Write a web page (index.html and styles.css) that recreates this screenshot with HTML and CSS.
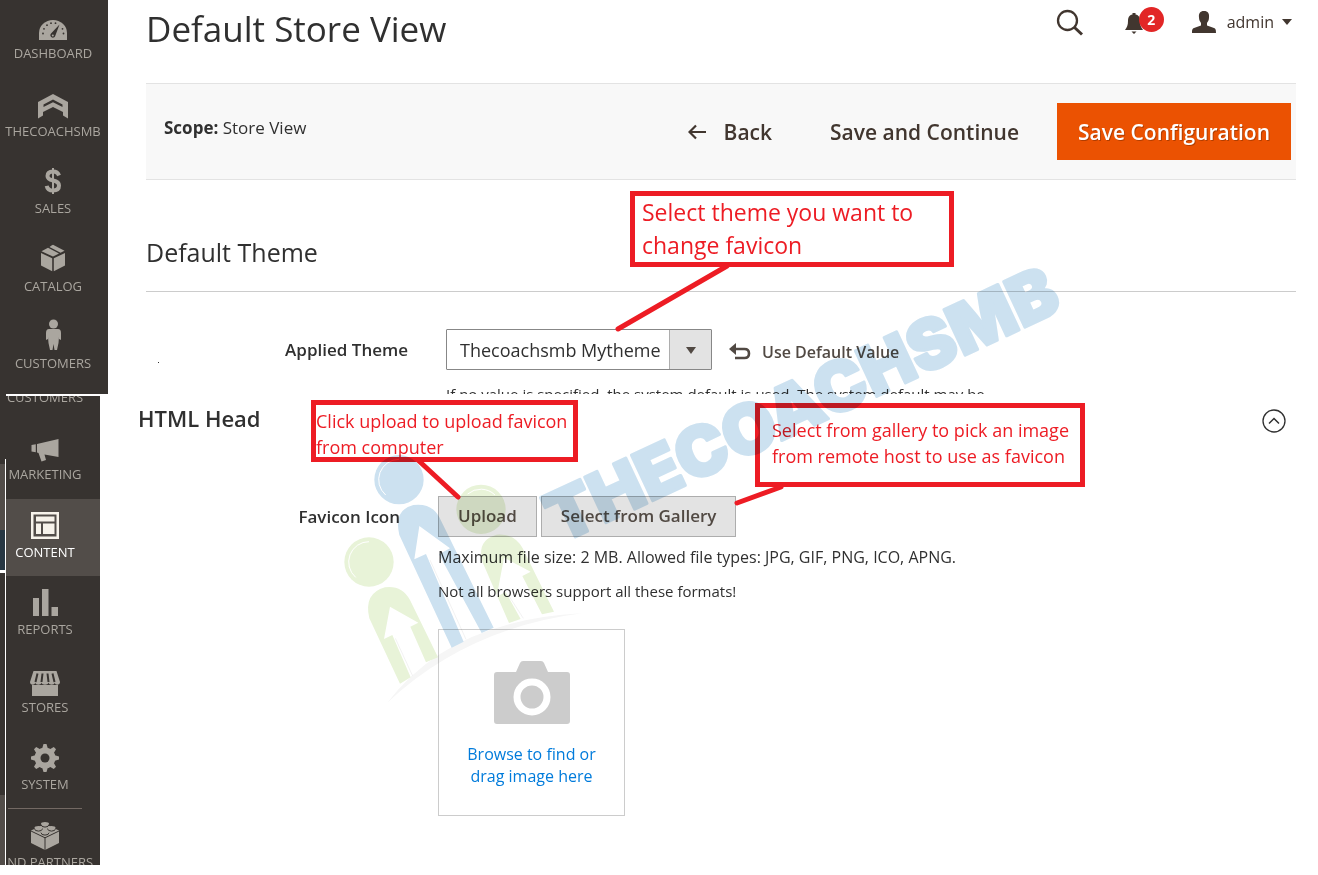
FILE: index.html
```html
<!DOCTYPE html>
<html lang="en">
<head>
  <meta charset="UTF-8">
  <title>Default Store View</title>
  <meta name="viewport" content="width=device-width, initial-scale=1.0">
  <link rel="stylesheet" href="styles.css">
</head>
<body>
  <section class="panel panel-top">
    <nav class="sidebar">
      <ul class="menu">
        <li><a href="#">
          <svg viewBox="0 0 32 32"><path d="M2 30V23A14 13 0 0 1 30 23V30Z"/><g class="cut"><path d="M22.500 14.500L18.200 26A2.500 2.500 0 1 1 14 23.500Z"/><circle cx="6" cy="23.500" r=".9"/><circle cx="7" cy="18.800" r=".9"/><circle cx="10" cy="15.200" r=".9"/><circle cx="14" cy="13.200" r=".9"/><circle cx="18.500" cy="13.200" r=".9"/><circle cx="25.500" cy="18.800" r=".9"/><circle cx="26.500" cy="23.500" r=".9"/></g><circle cx="15.800" cy="25.500" r="1"/></svg>
          <span>DASHBOARD</span></a></li>
        <li><a href="#">
          <svg viewBox="0 0 32 32"><path d="M16 6L31 14V30.500L26 27.500V24L16 19L6 24V27.500L1 30.500V14Z"/><path class="cut" d="M6.500 16.500L16 11.600L25.500 16.500V19L16 14.200L6.500 19Z"/></svg>
          <span>THECOACHSMB</span></a></li>
        <li><a href="#">
          <svg viewBox="0 0 32 32"><path class="stroke" d="M22 10.500C21 7.500 19 6.500 16 6.500C12 6.500 10.500 8.500 10.500 11C10.500 17.500 22 13.500 22 20.500C22 23.500 20 25.500 16 25.500C12.500 25.500 10.300 24 9.700 20.800" stroke-width="4"/><path class="stroke" d="M16 3V29" stroke-width="2"/></svg>
          <span>SALES</span></a></li>
        <li><a href="#">
          <svg viewBox="0 0 32 32"><path d="M14.500 2.500L16 1.800L27.500 7.800L23.500 9.800L12.500 4ZM11 4.800L22 10.600L16 13.600L4.500 8.200ZM4 10L15.200 15.300V28.300L4 22.500ZM28 10L16.800 15.300V28.300L28 22.500Z"/></svg>
          <span>CATALOG</span></a></li>
        <li><a href="#">
          <svg viewBox="0 0 32 32"><circle cx="16.500" cy="4" r="4.500"/><path d="M12 9H21C23 9 24 10.500 24 13V20L22 19V17L21.500 23L20 30H17.500L16.500 24L15.500 30H13L11.500 23L11 17V19L9 20V13C9 10.500 10 9 12 9Z"/></svg>
          <span>CUSTOMERS</span></a></li>
      </ul>
    </nav>

    <main class="content">
      <header class="page-header">
        <h1>Default Store View</h1>
        <div class="tools">
          <button class="tool" aria-label="Search"><svg class="i-search" viewBox="0 0 28 28"><circle cx="11.500" cy="11.500" r="9.500" fill="none" stroke="#41362f" stroke-width="2.300"/><path d="M18 18L26 25.500" stroke="#41362f" stroke-width="3"/></svg></button>
          <button class="tool bell" aria-label="Notifications"><svg class="i-bell" viewBox="0 0 20 22"><path fill="#41362f" d="M8.500 1H11.500V2.500C15 3 16 6 16 9C16 13 17 15 19 18H1C3 15 4 13 4 9C4 6 5 3 8.500 2.500ZM7.500 19.500H12.500L10 22Z"/></svg><span class="count">2</span></button>
          <button class="tool user"><svg class="i-user" viewBox="0 0 24 22"><path fill="#41362f" d="M12 0C16 0 17.500 2.500 17 6.500C17 9 16 10.500 15 12V14.500L22 17C23.500 17.600 24 18.500 24 22H0C0 18.500 .5 17.600 2 17L9 14.500V12C8 10.500 7 9 7 6.500C6.500 2.500 8 0 12 0Z"/></svg><span>admin</span><i class="caret"></i></button>
        </div>
      </header>

      <div class="actions">
        <div class="scope"><b>Scope:</b> Store View</div>
        <div class="action-buttons">
          <button class="btn-plain btn-back"><svg class="i-back" viewBox="0 0 18 16"><path d="M18 8H2M8 1.500L1.500 8L8 14.500" fill="none" stroke="#41362f" stroke-width="2.200"/></svg>Back</button>
          <button class="btn-plain">Save and Continue</button>
          <button class="btn-primary">Save Configuration</button>
        </div>
      </div>

      <h2 class="section-title">Default Theme</h2>
      <div class="field">
        <span class="dot"></span>
        <label for="theme">Applied Theme</label>
        <div class="select-wrap">
          <select id="theme"><option>Thecoachsmb Mytheme</option></select>
        </div>
        <button class="use-default"><svg class="i-undo" viewBox="0 0 22 17"><path fill="#514943" d="M0 6L7 0V12Z"/><path d="M5 6H15.500C18.500 6 20 8 20 10.500S18.500 15 15.500 15H6" fill="none" stroke="#514943" stroke-width="2.600"/></svg>Use Default Value</button>
      </div>
      <p class="field-note">If no value is specified, the system default is used. The system default may be</p>
    </main>
  </section>

  <section class="panel panel-bottom">
    <div class="strip"><i class="strip-active"></i><i class="strip-blue"></i><i class="strip-dark"></i><i class="strip-end"></i></div>
    <nav class="sidebar">
      <div class="cropped">CUSTOMERS</div>
      <ul class="menu">
        <li><a href="#">
          <svg viewBox="0 0 32 32"><path d="M8 13L29.500 8V26L15.500 23.500L17 29L12.500 30.500L9.500 22L8 21.500ZM2.500 14L6.800 13.200V21.300L2.500 20.500Z"/></svg>
          <span>MARKETING</span></a></li>
        <li class="active"><a href="#">
          <svg viewBox="0 0 32 32"><path fill-rule="evenodd" d="M2 3H30V30H2ZM4.500 5.500V27.500H27.500V5.500Z"/><path d="M7 7.500H25.500V12.500H7ZM7 14.500H12V25H7ZM14 14.500H25.500V25H14Z"/></svg>
          <span>CONTENT</span></a></li>
        <li><a href="#">
          <svg viewBox="0 0 32 32"><path d="M4 12H10V30H4ZM13 3H19.500V30H13ZM22.500 21H29V30H22.500Z"/></svg>
          <span>REPORTS</span></a></li>
        <li><a href="#">
          <svg viewBox="0 0 32 32"><path d="M4.500 7H27.500L31 18C31 21.500 26 21.500 25.800 18.500C25.500 21.500 20 21.500 19.500 18.500C19 21.500 13 21.500 12.500 18.500C12 21.500 6.500 21.500 6.200 18.500C6 21.500 1 21.500 1 18ZM3 21H29V32H3Z"/><path class="cut-line" d="M8.500 9.500L6.500 18M13.500 9.500L12.500 18M18.500 9.500L19.500 18M23.500 9.500L25.500 18" stroke-width="2"/></svg>
          <span>STORES</span></a></li>
        <li><a href="#">
          <svg viewBox="0 0 32 32"><circle cx="16" cy="17" r="10.500"/><path d="M13 8L14.500 3H17.500L19 8ZM13 26L14.500 31H17.500L19 26ZM7 14L2 15.500V18.500L7 20ZM25 14L30 15.500V18.500L25 20ZM8 13.500L5 8.200L7.200 6L12.500 9ZM19.500 9L24.800 6L27 8.200L24 13.500ZM8 20.500L5 25.800L7.200 28L12.500 25ZM19.500 25L24.800 28L27 25.800L24 20.500Z"/><circle class="cut" cx="16" cy="17" r="4.500"/></svg>
          <span>SYSTEM</span></a></li>
      </ul>
      <a class="partners" href="#">
        <svg viewBox="0 0 32 32"><path d="M2 11.500L16 5L30 11.500V24L16 31L2 24Z"/><path class="thin" d="M2 12L16 18.800L30 12M16 18.800V31"/><g class="thin"><path d="M12 5.500A4 2.600 0 0 0 20 5.500M5.500 9.500A4 2.600 0 0 0 13.500 9.500M18.500 9.500A4 2.600 0 0 0 26.500 9.500M12 13.500A4 2.600 0 0 0 20 13.500"/></g><ellipse cx="16" cy="4.800" rx="4" ry="1.900"/><ellipse cx="9.500" cy="8.800" rx="4" ry="1.900"/><ellipse cx="22.500" cy="8.800" rx="4" ry="1.900"/><ellipse cx="16" cy="12.800" rx="4" ry="1.900"/></svg>
        <span>FIND PARTNERS</span></a>
    </nav>

    <div class="content content-head">
      <div class="head-row">
        <h2>HTML Head</h2>
        <button class="collapse" aria-label="Collapse"><svg class="i-collapse" viewBox="0 0 24 24"><circle cx="12" cy="12" r="11" fill="none" stroke="#303030" stroke-width="1.300"/><path d="M7 14.500L12 9.500L17 14.500" fill="none" stroke="#303030" stroke-width="1.500"/></svg></button>
      </div>
      <div class="upload-row">
        <span class="upload-label">Favicon Icon</span>
        <div class="upload">
          <div class="upload-buttons">
            <button class="btn-grey">Upload</button>
            <button class="btn-grey">Select from Gallery</button>
          </div>
          <p class="hint">Maximum file size: 2 MB. Allowed file types: JPG, GIF, PNG, ICO, APNG.</p>
          <p class="hint hint-small">Not all browsers support all these formats!</p>
          <button class="dropzone">
            <svg class="i-camera" viewBox="0 0 76 64"><path fill="#ccc" d="M3 11H22L26 2Q27 0 29 0H47Q49 0 50 2L54 11H73Q76 11 76 14V60Q76 63 73 63H3Q0 63 0 60V14Q0 11 3 11Z"/><circle cx="38" cy="36" r="15" fill="#ccc" stroke="#fff" stroke-width="7"/></svg>
            <span>Browse to find or<br>drag image here</span>
          </button>
        </div>
      </div>
    </div>
  </section>

  <div class="note note-theme">Select theme you want to<br>change favicon</div>
  <div class="note note-upload">Click upload to upload favicon<br>from computer</div>
  <div class="note note-gallery">Select from gallery to pick an image<br>from remote host to use as favicon</div>
  <svg class="overlay arrows" viewBox="0 0 1318 875">
    <path d="M727 266L618 329M419 461L458 497M781 487L737 503"/>
  </svg>

  <svg class="overlay watermark" viewBox="0 0 1318 875">
    <g transform="translate(330 440) scale(.33333)">
      <path fill="#f6f6f6" d="M172 788Q360 540 755 520Q410 565 172 788Z"/>
      <g fill="#cce1f0">
        <circle cx="207" cy="119" r="74"/>
        <path d="M365 623L208 285Q190 210 250 195Q305 188 328 232L491 563L455 579L327 343L360 325L268 258L253 358L288 342L401 605Z"/>
      </g>
      <g fill="#e8f3d8">
        <circle cx="117" cy="366" r="74"/>
        <circle cx="453" cy="208" r="74"/>
        <path d="M210 731L118 535Q100 460 165 442Q215 435 240 480L324 652L288 667L241 560L265 548L180 500L162 597L187 585L242 712Z"/>
        <path d="M537 549L457 365Q440 300 500 284Q555 280 578 325L672 515L636 523L577 408L602 395L522 353L500 470L527 456L572 537Z"/>
      </g>
      <g fill="none" stroke="#fff" stroke-width="3">
        <path d="M207 58A61 61 0 0 0 167 165M117 305A61 61 0 0 0 77 412M495 165A61 61 0 0 0 413 162"/>
        <path d="M300 360L408 598M196 595L248 708M535 465L580 535" stroke="#f2f2f2"/>
      </g>
    </g>
    <text class="watermark-text" transform="translate(560 544) rotate(-25)">THECOACHSMB</text>
  </svg>
</body>
</html>
```

FILE: styles.css
```css
* {
  box-sizing: border-box;
}
body {
  margin: 0;
  position: relative;
  background: #fff;
  color: #303030;
  font-family: "Open Sans", sans-serif;
  font-size: 16px;
}
h1, h2, p, ul {
  margin: 0;
  padding: 0;
  font-weight: 400;
}
button {
  border: 0;
  padding: 0;
  background: none;
  color: inherit;
  font-family: inherit;
  cursor: pointer;
}
.panel {
  display: flex;
  overflow: hidden;
}
.panel-top {
  height: 394px;
}
.panel-bottom {
  height: 471px;
}

/* sidebar */
.sidebar {
  flex: none;
  background: #373330;
  color: #aaa69f;
  overflow: hidden;
}
.panel-top .sidebar {
  width: 108px;
  padding-right: 2px;
}
.panel-bottom .sidebar {
  width: 94px;
  border-top: 2px solid #fff;
}
.menu {
  display: flex;
  flex-direction: column;
  height: 388px;
  list-style: none;
}
.menu li {
  flex: 1;
}
.sidebar a {
  display: flex;
  flex-direction: column;
  align-items: center;
  padding-top: 10px;
  color: inherit;
  text-decoration: none;
  font-size: 13px;
  line-height: 20px;
  white-space: nowrap;
}
.panel-bottom .menu a,
.partners,
.cropped {
  padding-right: 16px;
}
.sidebar svg {
  width: 32px;
  height: 32px;
  margin-bottom: 1px;
  fill: #aaa69f;
  overflow: visible;
}
.sidebar .active {
  background: #524d49;
  color: #fff;
}
.sidebar .active svg {
  fill: #f7f3eb;
}
.sidebar .cut {
  fill: #373330;
}
.sidebar .cut-line {
  fill: none;
  stroke: #373330;
  stroke-width: 2;
}
.sidebar .stroke {
  fill: none;
  stroke: #aaa69f;
}
.sidebar .thin {
  fill: none;
  stroke: #373330;
  stroke-width: 1;
}
.cropped {
  display: flex;
  align-items: flex-start;
  justify-content: center;
  height: 25px;
  font-size: 13px;
  line-height: 2px;
}
.sidebar .partners {
  position: relative;
}
.partners::before {
  content: "";
  position: absolute;
  top: -1px;
  left: 2px;
  width: 74px;
  height: 1px;
  background: #736963;
}
.strip {
  flex: none;
  display: flex;
  flex-direction: column;
  width: 6px;
  padding-top: 65px;
  background: linear-gradient(#373330 65px, #fff 65px);
}
.strip i {
  width: 5px;
}
.strip-active {
  height: 71px;
  border-top: 5px solid #373330;
  background: #524d49;
}
.strip-blue {
  height: 40px;
  background: #273743;
}
.strip-dark {
  height: 225px;
  border-top: 3px solid #fff;
  background: #373330;
}
.strip-end {
  flex: 1;
  background: #524d49;
}

/* main area */
.content {
  flex: 1;
  min-width: 0;
  padding: 0 22px 0 38px;
}
.page-header {
  display: flex;
  justify-content: space-between;
  height: 83px;
}
h1 {
  font-size: 35px;
  line-height: 58px;
}
.tools {
  display: flex;
  align-items: flex-start;
  padding: 8px 4px 0 0;
}
.tool {
  display: flex;
  align-items: center;
  height: 28px;
}
.i-search {
  width: 28px;
  height: 28px;
  margin-top: 2px;
}
.bell {
  position: relative;
  margin: 0 28px 0 40px;
  width: 40px;
}
.i-bell {
  width: 20px;
  height: 22px;
  margin-top: 2px;
}
.count {
  position: absolute;
  top: -1px;
  right: 0;
  width: 25px;
  height: 25px;
  border-radius: 50%;
  background: #e22626;
  color: #fff;
  font-size: 14px;
  font-weight: 700;
  line-height: 25px;
}
.user {
  font-size: 16px;
  color: #41362f;
}
.i-user {
  width: 24px;
  height: 22px;
  margin-right: 11px;
}
.caret {
  margin-left: 8px;
  border: 5px solid transparent;
  border-top: 6px solid #41362f;
  border-bottom: 0;
}
.actions {
  display: flex;
  justify-content: space-between;
  height: 97px;
  padding: 19px 5px 0 18px;
  border-top: 1px solid #e3e3e3;
  border-bottom: 1px solid #e3e3e3;
  background: #f8f8f8;
}
.scope {
  font-size: 17px;
  line-height: 50px;
}
.scope b {
  font-weight: 700;
}
.action-buttons {
  display: flex;
  align-items: flex-start;
}
.action-buttons button {
  height: 57px;
  font-size: 21px;
  font-weight: 600;
}
.action-buttons .btn-plain {
  margin-right: 38px;
  color: #41362f;
}
.action-buttons .btn-back {
  display: flex;
  align-items: center;
  margin-right: 58px;
}
.i-back {
  width: 18px;
  height: 16px;
  margin-right: 18px;
}
.btn-primary {
  padding: 0 21px;
  background: #eb5202;
  color: #fff;
  text-shadow: 1px 1px 0 #00000040;
}
.section-title {
  height: 112px;
  padding-top: 54px;
  border-bottom: 1px solid #ccc;
  font-size: 25px;
  line-height: 36px;
}
.field {
  display: flex;
  align-items: center;
  padding-top: 37px;
}
.dot {
  align-self: flex-end;
  width: 1px;
  height: 1px;
  margin: 0 0 7px 12px;
  background: #303030;
}
.field label {
  width: 249px;
  text-align: right;
  font-size: 17px;
  font-weight: 600;
}
.select-wrap {
  position: relative;
  width: 266px;
  margin-left: 38px;
}
.select-wrap::before {
  content: "";
  position: absolute;
  top: 1px;
  right: 1px;
  width: 41px;
  height: 39px;
  border-left: 1px solid #adadad;
  background: #e3e3e3;
  pointer-events: none;
}
.select-wrap::after {
  content: "";
  position: absolute;
  top: 18px;
  right: 16px;
  border: 5px solid transparent;
  border-top: 7px solid #514943;
  border-bottom: 0;
  pointer-events: none;
}
.select-wrap select {
  display: block;
  width: 100%;
  height: 41px;
  padding: 0 44px 0 13px;
  border: 1px solid #878787;
  border-radius: 1px;
  background: #fff;
  color: #303030;
  font-family: inherit;
  font-size: 18px;
  appearance: none;
}
.use-default {
  display: flex;
  align-items: center;
  margin-left: 17px;
  padding-top: 4px;
  color: #514943;
  font-size: 16px;
  font-weight: 600;
}
.i-undo {
  width: 22px;
  height: 17px;
  margin-right: 11px;
}
.field-note {
  padding: 13px 0 0 300px;
  font-size: 15px;
  line-height: 22px;
  white-space: nowrap;
}

/* html head */
.head-row {
  display: flex;
  justify-content: space-between;
  padding: 7px 10px 0 0;
}
.head-row h2 {
  font-size: 22px;
  font-weight: 600;
  line-height: 34px;
}
.i-collapse {
  display: block;
  width: 24px;
  height: 24px;
  margin-top: 5px;
}
.upload-row {
  display: flex;
  padding-top: 61px;
}
.upload-label {
  width: 262px;
  margin-right: 38px;
  text-align: right;
  font-size: 17px;
  font-weight: 600;
  line-height: 41px;
}
.upload-buttons {
  display: flex;
  gap: 4px;
}
.btn-grey {
  height: 41px;
  padding: 0 19px 2px;
  border: 1px solid #adadad;
  background: #e3e3e3;
  color: #514943;
  font-size: 17px;
  font-weight: 600;
}
.hint {
  padding-top: 8px;
  line-height: 24px;
}
.hint-small {
  padding-top: 10px;
  font-size: 15px;
}
.dropzone {
  display: flex;
  flex-direction: column;
  align-items: center;
  width: 187px;
  height: 187px;
  margin-top: 26px;
  padding-top: 31px;
  border: 1px solid #ccc;
  color: #007bdb;
  font-size: 16px;
  line-height: 22px;
}
.i-camera {
  width: 76px;
  height: 64px;
  margin-bottom: 18px;
}

/* callouts */
.note {
  position: absolute;
  border: 5px solid #ed1c24;
  color: #ed1c24;
  font-size: 18px;
  line-height: 26px;
  white-space: nowrap;
}
.note-theme {
  top: 191px;
  left: 630px;
  width: 324px;
  height: 76px;
  padding-left: 7px;
  background: #fff;
  font-size: 23px;
  line-height: 33px;
}
.note-upload {
  top: 400px;
  left: 311px;
  width: 267px;
  height: 62px;
  padding-top: 3px;
}
.note-gallery {
  top: 403px;
  left: 755px;
  width: 330px;
  height: 84px;
  padding: 9px 0 0 12px;
}
.overlay {
  position: absolute;
  top: 0;
  left: 0;
  width: 1318px;
  height: 875px;
  pointer-events: none;
}
.arrows path {
  fill: none;
  stroke: #ed1c24;
  stroke-width: 5;
  stroke-linecap: round;
}
.watermark {
  mix-blend-mode: multiply;
}
.watermark-text {
  fill: #cce1f0;
  stroke: #cce1f0;
  stroke-width: 3;
  stroke-linejoin: round;
  font-family: Inter, sans-serif;
  font-size: 69px;
  font-weight: 900;
}
```
